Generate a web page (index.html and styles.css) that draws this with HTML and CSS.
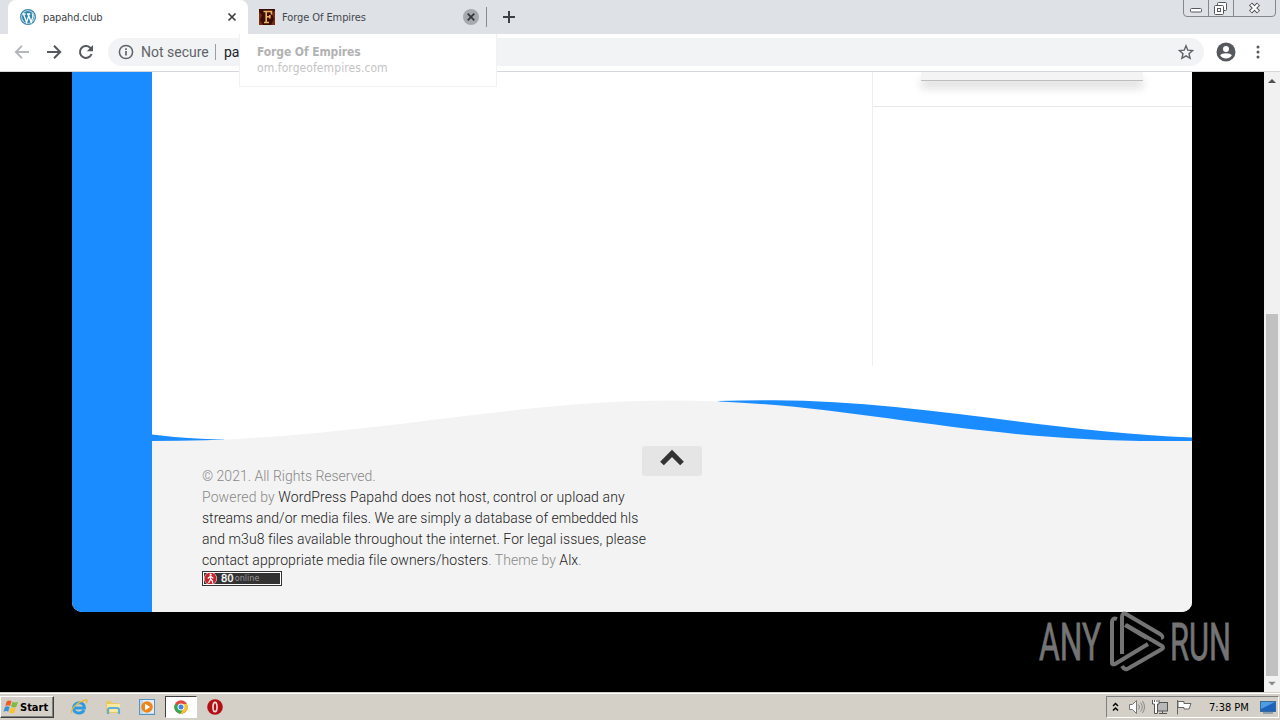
FILE: index.html
```html
<!DOCTYPE html>
<html lang="en">
<head>
  <meta charset="UTF-8">
  <title>papahd.club</title>
  <link rel="stylesheet" href="styles.css">
</head>
<body>
  <div class="tabs">
    <div class="tab active">
      <svg class="favicon" viewBox="0 0 16 16">
        <circle cx="8" cy="8" r="7.4" fill="#d5e8f1" stroke="#3a87ab" stroke-width="1.2"/>
        <circle cx="8" cy="8" r="6" fill="#2f86ad"/>
        <path d="M2.5 5h3.2M7 5h3.2M3.6 5.2l3 8 2-6-.8-2.2M8.3 5.2l2.8 8 1.8-5.4c.5-1.5-.6-2.2-.6-3.4" fill="none" stroke="#fff" stroke-width="1.3"/>
      </svg>
      <span class="tab-title first-title">papahd.club</span>
      <svg class="close" viewBox="0 0 16 16"><path d="M4.5 4.5l7 7M11.5 4.5l-7 7" stroke="#3c4043" stroke-width="1.7"/></svg>
    </div>
    <div class="tab second">
      <svg class="favicon" viewBox="0 0 16 16">
        <rect width="16" height="16" fill="#3a0d06"/>
        <path d="M0 3l3 3-2 5 3 5H0zM16 1l-3 4 2 5-3 6h4z" fill="#7a2c12"/>
        <path d="M4.5 2.5h8v3M7.2 2.5v11M5 13.5h5M7 7.7h4M10.8 6v3.5" fill="none" stroke="#f0b45a" stroke-width="1.6"/>
      </svg>
      <span class="tab-title second-title">Forge Of Empires</span>
      <svg class="close" viewBox="0 0 16 16"><circle cx="8" cy="8" r="8" fill="#a6a9ae"/><path d="M4.7 4.7l6.6 6.6M11.3 4.7l-6.6 6.6" stroke="#33363a" stroke-width="1.7"/></svg>
    </div>
    <div class="tab-divider"></div>
    <svg class="new-tab" viewBox="0 0 12 12"><path d="M6 0v12M0 6h12" stroke="#3c4043" stroke-width="2"/></svg>
    <svg class="window-buttons" viewBox="0 0 94 17">
      <path d="M.5 0v13q0 3.500 3.500 3.500h85q3.500 0 3.500-3.500V0M25.500 0v16M50.500 0v16" fill="none" stroke="#84878c"/>
      <g fill="#fff" stroke="#55585e">
        <rect x="7.500" y="8.500" width="11" height="3.500" rx="1"/>
        <rect x="34.500" y="2.500" width="9" height="8" rx="1"/>
        <rect x="31.500" y="5.500" width="9" height="9" rx="1"/>
        <rect x="34.500" y="8.500" width="3" height="3"/>
      </g>
      <path d="M67.500 4l8 8M75.500 4l-8 8" stroke="#55585e" stroke-width="4.400"/>
      <path d="M68 4.500l7 7M75 4.500l-7 7" stroke="#fff" stroke-width="2.400"/>
    </svg>
  </div>

  <div class="toolbar">
    <svg class="nav" viewBox="0 0 16 16"><path d="M15 8H2M8 1.800L1.800 8 8 14.200" fill="none" stroke="#b4b6b9" stroke-width="1.900"/></svg>
    <svg class="nav" viewBox="0 0 16 16"><path d="M1 8h13M8 1.800L14.200 8 8 14.200" fill="none" stroke="#55585c" stroke-width="2"/></svg>
    <svg class="nav" viewBox="0 0 16 16"><path d="M13.600 10A6 6 0 1 1 12.200 3.700L14 5.500" fill="none" stroke="#55585c" stroke-width="2"/><path d="M15 1v6.200H8.800z" fill="#55585c"/></svg>
    <div class="address">
      <svg class="info" viewBox="0 0 16 16"><circle cx="8" cy="8" r="6.600" fill="none" stroke="#5f6368" stroke-width="1.500"/><path d="M8 7v4.500M8 4.200v1.700" stroke="#5f6368" stroke-width="1.700"/></svg>
      <span class="not-secure">Not secure</span>
      <span class="address-divider"></span>
      <span class="url">pa</span>
      <svg class="star" viewBox="0 0 16 16"><path d="M8 1.800l1.800 4.400 4.800.4-3.600 3.100 1.100 4.600L8 11.800l-4.100 2.500L5 9.700 1.400 6.600l4.800-.4z" fill="none" stroke="#5f6368" stroke-width="1.400"/></svg>
    </div>
    <svg class="avatar" viewBox="0 0 20 20"><circle cx="10" cy="10" r="9.500" fill="#55585c"/><circle cx="10" cy="6.900" r="3" fill="#fff"/><path d="M4.200 13.500c1-3 10.600-3 11.600 0-2.600 4-9 4-11.600 0z" fill="#fff"/></svg>
    <svg class="menu" viewBox="0 0 4 16"><g fill="#55585c"><circle cx="2" cy="3" r="1.500"/><circle cx="2" cy="8" r="1.500"/><circle cx="2" cy="13" r="1.500"/></g></svg>
    <div class="tooltip">
      <strong>Forge Of Empires</strong>
      <span>om.forgeofempires.com</span>
    </div>
  </div>

  <div class="viewport">
    <div class="page">
      <div class="side-stripe"></div>
      <div class="main">
        <div class="content">
          <div class="posts"></div>
          <div class="sidebar">
            <div class="widget"><div class="card"></div></div>
          </div>
        </div>
        <svg class="wave" viewBox="0 0 1040 42">
          <path d="M0 34.500Q36 39 72 39.600L72 42H0zM565 1Q595 .3 622 .3C758 .3 898 32 1040 37.500V42H700z" fill="#1a8cff"/>
          <path d="M0 41C208 41 348 .5 520 .5S808 41 1008 41H1040V42H0z" fill="#f3f3f3"/>
        </svg>
        <div class="footer">
          <div class="credits">
            <div class="line line1">© 2021. All Rights Reserved.</div>
            <div class="line line2">Powered by <b>WordPress Papahd does not host, control or upload any</b></div>
            <div class="line line3"><b>streams and/or media files. We are simply a database of embedded hls</b></div>
            <div class="line line4"><b>and m3u8 files available throughout the internet. For legal issues, please</b></div>
            <div class="line line5"><b>contact appropriate media file owners/hosters</b>. Theme by <b>Alx</b>.</div>
            <div class="counter">
              <svg viewBox="0 0 13 13"><circle cx="6.500" cy="6.500" r="6.500" fill="#fff"/><circle cx="6.500" cy="6.500" r="6" fill="#c8262c"/><circle cx="6.600" cy="2.700" r="1.100" fill="#fff"/><path d="M6.500 4v3.500L4.500 11M6.500 7l2 2v2.500M3.800 6.500L6.500 4.300l2.800 2" fill="none" stroke="#fff" stroke-width="1.200"/></svg>
              <span class="count">80</span><span class="online">online</span>
            </div>
          </div>
          <div class="to-top"><svg viewBox="0 0 26 18"><path d="M3 14.500L13 4.500l10 10" fill="none" stroke="#333" stroke-width="5.200"/></svg></div>
        </div>
      </div>
    </div>
    <div class="scrollbar">
      <svg class="arrow" viewBox="0 0 16 17"><path d="M4 11l4-4 4 4z" fill="#505050"/></svg>
      <div class="thumb"></div>
      <svg class="arrow" viewBox="0 0 16 17"><path d="M4 6l4 4 4-4z" fill="#8a8a8a"/></svg>
    </div>
    <svg class="watermark" viewBox="0 0 200 66">
      <g class="watermark-text">
        <text x="4" y="51.500" textLength="62" lengthAdjust="spacingAndGlyphs">ANY</text>
        <text x="135" y="51.500" textLength="61" lengthAdjust="spacingAndGlyphs">RUN</text>
      </g>
      <g fill="none" stroke="#747474" stroke-width="4" stroke-linejoin="round">
        <path d="M82 11q-5-2-5 4v40q0 2 3 1l33-20"/>
        <path d="M87 46V9q0-5 4-3l34 20q4 3 1 4M91 17l36 21q2 2 0 3L94 60q-4 3-7-2"/>
        <path d="M90 17l22 13"/>
      </g>
    </svg>
  </div>

  <div class="taskbar">
    <div class="start">
      <svg viewBox="0 0 18 16"><path d="M4 2q3-2 5 0L7.500 7q-2-1.500-5 0z" fill="#f1592a"/><path d="M10 2.500q3 1.500 6 0L14 8q-3 1-5.500-.5z" fill="#7fba42"/><path d="M2 8q3-1.500 5 0l-1.500 5q-2-1.500-5 0z" fill="#3b91d8"/><path d="M8 8.500q2.500 1.500 5.500.5l-1.500 5q-3 1.200-5.500-.5z" fill="#fcc22d"/></svg>
      <span>Start</span>
    </div>
    <div class="launch ie"><svg viewBox="0 0 18 18"><path d="M3.500 10h11c.4-7-10.800-7-11 0 .3 6.200 8.800 6.400 10.500 2" fill="none" stroke="#2e9be0" stroke-width="2.900"/><path d="M2 15c-3-2 6-12 14-13 2 0 1 2 0 3" fill="none" stroke="#e9b93a" stroke-width="1.400"/></svg></div>
    <div class="launch"><svg viewBox="0 0 18 18"><path d="M2 3h5l1 2h7v10H2z" fill="#e9c764"/><path d="M3 6h13v8H3z" fill="#fae9a5"/><path d="M4 16v-4q0-2 2-2h7q2 0 2 2v4" fill="none" stroke="#63aed6" stroke-width="2.200"/></svg></div>
    <div class="launch"><svg viewBox="0 0 18 18"><rect x="1.500" y="1.500" width="15" height="15" fill="#b9daf0" stroke="#5795c0"/><rect x="5" y="2" width="11" height="13" fill="#e1effa"/><circle cx="9" cy="9" r="5.800" fill="#ef8518"/><path d="M7 5.800l5.200 3.200L7 12.200z" fill="#fff"/></svg></div>
    <div class="launch pressed"><svg viewBox="0 0 18 18"><circle cx="9" cy="9" r="6.700" fill="#dd4b3c"/><path d="M3.200 5.700A6.700 6.700 0 0 0 8.400 15.700L11.800 10.500 9 9z" fill="#36a853"/><path d="M9 6h6q2 5-2 8-2 2-4.600 1.700l3.400-5.200z" fill="#f9c623"/><circle cx="9" cy="9" r="3.100" fill="#4285e8" stroke="#fff"/></svg></div>
    <div class="launch"><svg viewBox="0 0 18 18"><circle cx="9" cy="9" r="7.800" fill="#b30e14"/><ellipse cx="9" cy="9" rx="2" ry="4.700" fill="#b30e14" stroke="#f3dada" stroke-width="1.700"/></svg></div>
    <div class="tray">
      <svg class="chevrons" viewBox="0 0 7 10"><path d="M1 4l2.500-2.500L6 4M1 8.500L3.500 6 6 8.500" fill="none" stroke="#000" stroke-width="1.500"/></svg>
      <svg class="tray-icon" viewBox="0 0 17 16"><path d="M1.500 5.500h3l4-4v13l-4-4h-3z" fill="#fff" stroke="#777"/><path d="M10.500 5.500q2 2.500 0 5M12.500 3.500q3.500 4.500 0 9M14.500 2q4 6 0 12" fill="none" stroke="#888"/></svg>
      <svg class="tray-icon net" viewBox="0 0 17 16"><rect x="5.500" y="3.500" width="10" height="8.500" fill="#b8b8b8" stroke="#555"/><path d="M7 14.500h8M10.500 12v2" stroke="#555"/><path d="M.5 1v4h2v9.500h3V5h1.500V1M2.500 1v2M5 1v2" fill="#fff" stroke="#555"/></svg>
      <svg class="tray-icon flag" viewBox="0 0 17 16"><path d="M1.500 1v14.500M2 2.500h6v2h7l-2 5.500H8V8.500H2z" fill="#fff" stroke="#666"/></svg>
      <span class="clock">7:38 PM</span>
      <svg class="desktop" viewBox="0 0 16 14"><rect x=".5" y="1.500" width="15" height="10" fill="#1c63bb" stroke="#3b6998"/><path d="M1 2h14L1 9z" fill="#4f9ce2"/><path d="M3 13h10" stroke="#4c708e"/></svg>
    </div>
  </div>
</body>
</html>
```
FILE: styles.css
```css
* {
  box-sizing: border-box;
}

body {
  margin: 0;
  width: 1280px;
  height: 720px;
  display: flex;
  flex-direction: column;
  overflow: hidden;
  background: #000;
  font-family: "DejaVu Sans Condensed", "DejaVu Sans", sans-serif;
}

svg {
  display: block;
  flex-shrink: 0;
}

.tabs {
  height: 34px;
  flex-shrink: 0;
  display: flex;
  align-items: center;
  background: #dee1e6;
  padding-left: 8px;
}

.tab {
  height: 34px;
  display: flex;
  align-items: center;
  font-size: 11px;
  color: #45484c;
}

.tab.active {
  width: 240px;
  background: #fff;
  border-radius: 8px 8px 0 0;
  padding-left: 12px;
  color: #3c4043;
}

.tab.second {
  width: 238px;
  padding-left: 11px;
}

.favicon,
.close {
  width: 16px;
  height: 16px;
}

.tab-title {
  margin-left: 7px;
  flex: 1;
  white-space: nowrap;
}

.first-title {
  letter-spacing: -0.15px;
}

.second-title {
  letter-spacing: -0.08px;
}

.tab .close {
  margin-right: 8px;
}

.tab.second .close {
  margin-right: 7px;
}

.tab-divider {
  width: 1px;
  height: 20px;
  background: #888b90;
}

.new-tab {
  width: 12px;
  height: 12px;
  margin-left: 16px;
}

.window-buttons {
  width: 94px;
  height: 17px;
  margin-left: auto;
  margin-right: 3px;
  align-self: flex-start;
}

.toolbar {
  position: relative;
  z-index: 2;
  height: 38px;
  flex-shrink: 0;
  display: flex;
  align-items: center;
  background: #fff;
  border-bottom: 1px solid #d5d7da;
  padding: 0 0 1px 14px;
}

.nav {
  width: 16px;
  height: 16px;
  margin-right: 16px;
}

.address {
  width: 1096px;
  height: 28px;
  margin-left: -2px;
  border-radius: 14px;
  background: #f1f3f4;
  display: flex;
  align-items: center;
  padding: 0 10px;
  font-family: Roboto, sans-serif;
  font-size: 14px;
}

.info,
.star {
  width: 16px;
  height: 16px;
}

.not-secure {
  margin-left: 7px;
  width: 74px;
  color: #5f6368;
}

.address-divider {
  width: 1px;
  height: 16px;
  background: #9a9da1;
  margin-right: 8px;
}

.url {
  color: #202124;
}

.star {
  margin-left: auto;
}

.avatar {
  width: 20px;
  height: 20px;
  margin-left: 12px;
}

.menu {
  width: 4px;
  height: 16px;
  margin-left: 20px;
}

.tooltip {
  position: absolute;
  left: 239px;
  top: 0;
  width: 258px;
  height: 53px;
  display: flex;
  flex-direction: column;
  padding: 10px 17px;
  background: #fff;
  border: 1px solid #f1f1f1;
  border-top: 0;
  font-size: 12px;
  line-height: 16px;
  color: #c4c4c4;
}

.tooltip strong {
  color: #b2b2b2;
  letter-spacing: -0.1px;
}

.tooltip span {
  letter-spacing: 0.08px;
}

.viewport {
  position: relative;
  height: 620px;
  flex-shrink: 0;
  display: flex;
  background: #000;
}

.page {
  width: 1120px;
  height: 540px;
  margin-left: 72px;
  display: flex;
  border-radius: 0 0 10px 10px;
  overflow: hidden;
  background: #fff;
}

.side-stripe {
  width: 80px;
  background: #1a8cff;
}

.main {
  width: 1040px;
}

.content {
  height: 294px;
  display: flex;
}

.posts {
  width: 720px;
}

.sidebar {
  width: 320px;
  border-left: 1px solid #eee;
}

.widget {
  height: 35px;
  overflow: hidden;
  border-bottom: 1px solid #e8e8e8;
}

.card {
  width: 222px;
  height: 9px;
  margin-left: 48px;
  background: #f4f4f4;
  border-bottom: 1px solid #bdbdbd;
  box-shadow: 0 7px 10px rgba(0, 0, 0, 0.14);
}

.wave {
  width: 1040px;
  height: 42px;
  margin-top: 34px;
}

.footer {
  height: 170px;
  background: #f3f3f3;
  padding: 24px 0 0 50px;
  display: flex;
}

.credits {
  width: 440px;
  font-family: Roboto, sans-serif;
  font-size: 14px;
  font-weight: 300;
  line-height: 21px;
  color: #888;
}

.line {
  white-space: nowrap;
}

.line2 {
  letter-spacing: 0.12px;
}

.line3 {
  letter-spacing: 0.02px;
}

.line4,
.line5 {
  letter-spacing: 0.055px;
}

.credits b {
  font-weight: 300;
  color: #222;
}

.counter {
  width: 80px;
  height: 15px;
  display: flex;
  align-items: center;
  background: #333;
  border: 1px solid #333;
  outline: 1px solid #fff;
  outline-offset: -2px;
  padding-left: 1px;
  line-height: 13px;
}

.counter svg {
  width: 13px;
  height: 13px;
}

.count {
  margin-left: 4px;
  font: 10px/13px "DejaVu Sans", sans-serif;
  color: #fff;
  -webkit-text-stroke: 0.3px #fff;
}

.online {
  margin-left: 1px;
  font: 9px/13px "DejaVu Sans Condensed", sans-serif;
  color: #999;
}

.to-top {
  width: 60px;
  height: 30px;
  margin-top: -20px;
  border-radius: 3px;
  background: #e5e5e5;
  display: flex;
  justify-content: center;
}

.to-top svg {
  width: 26px;
  height: 18px;
  margin-top: 3px;
}

.scrollbar {
  width: 16px;
  height: 620px;
  margin-left: auto;
  background: #f1f1f1;
  display: flex;
  flex-direction: column;
  align-items: center;
}

.arrow {
  width: 16px;
  height: 17px;
}

.arrow:last-child {
  height: 16px;
}

.thumb {
  width: 12px;
  height: 362px;
  margin-top: auto;
  background: #c1c1c1;
}

.watermark {
  position: absolute;
  left: 1035px;
  top: 536px;
  width: 200px;
  height: 66px;
}

.watermark-text {
  font-family: Roboto, sans-serif;
  font-size: 52px;
  fill: #747474;
  stroke: #747474;
  stroke-width: 0.8px;
}

.taskbar {
  height: 28px;
  flex-shrink: 0;
  display: flex;
  align-items: center;
  background: #d4d0c8;
  border-top: 1px solid #d4d0c8;
  box-shadow: inset 0 1px #fff;
  padding-top: 1px;
}

.start {
  width: 54px;
  height: 22px;
  display: flex;
  align-items: center;
  border: 1px solid;
  border-color: #fff #404040 #404040 #fff;
  box-shadow: inset -1px -1px #808080;
  padding-left: 2px;
  margin-right: 9px;
  font-size: 11px;
  font-weight: bold;
}

.start svg {
  width: 17px;
  height: 16px;
}

.launch {
  width: 32px;
  height: 22px;
  margin-right: 2px;
  display: flex;
  align-items: center;
  justify-content: center;
}

.launch svg {
  width: 18px;
  height: 18px;
}

.launch.pressed {
  background: #fff;
  border: 1px solid;
  border-color: #404040 #fff #fff #404040;
}

.tray {
  width: 173px;
  height: 22px;
  margin-left: auto;
  margin-right: 1px;
  display: flex;
  align-items: center;
  border: 1px solid;
  border-color: #808080 #fff #fff #808080;
  padding-left: 5px;
}

.chevrons {
  width: 7px;
  height: 10px;
}

.tray-icon {
  width: 17px;
  height: 16px;
  margin-left: 9px;
}

.tray-icon.net,
.tray-icon.flag {
  margin-left: 7px;
}

.clock {
  margin-left: 16px;
  font-size: 11px;
  white-space: nowrap;
  width: 41px;
}

.desktop {
  width: 16px;
  height: 14px;
  margin-left: 10px;
}
```
